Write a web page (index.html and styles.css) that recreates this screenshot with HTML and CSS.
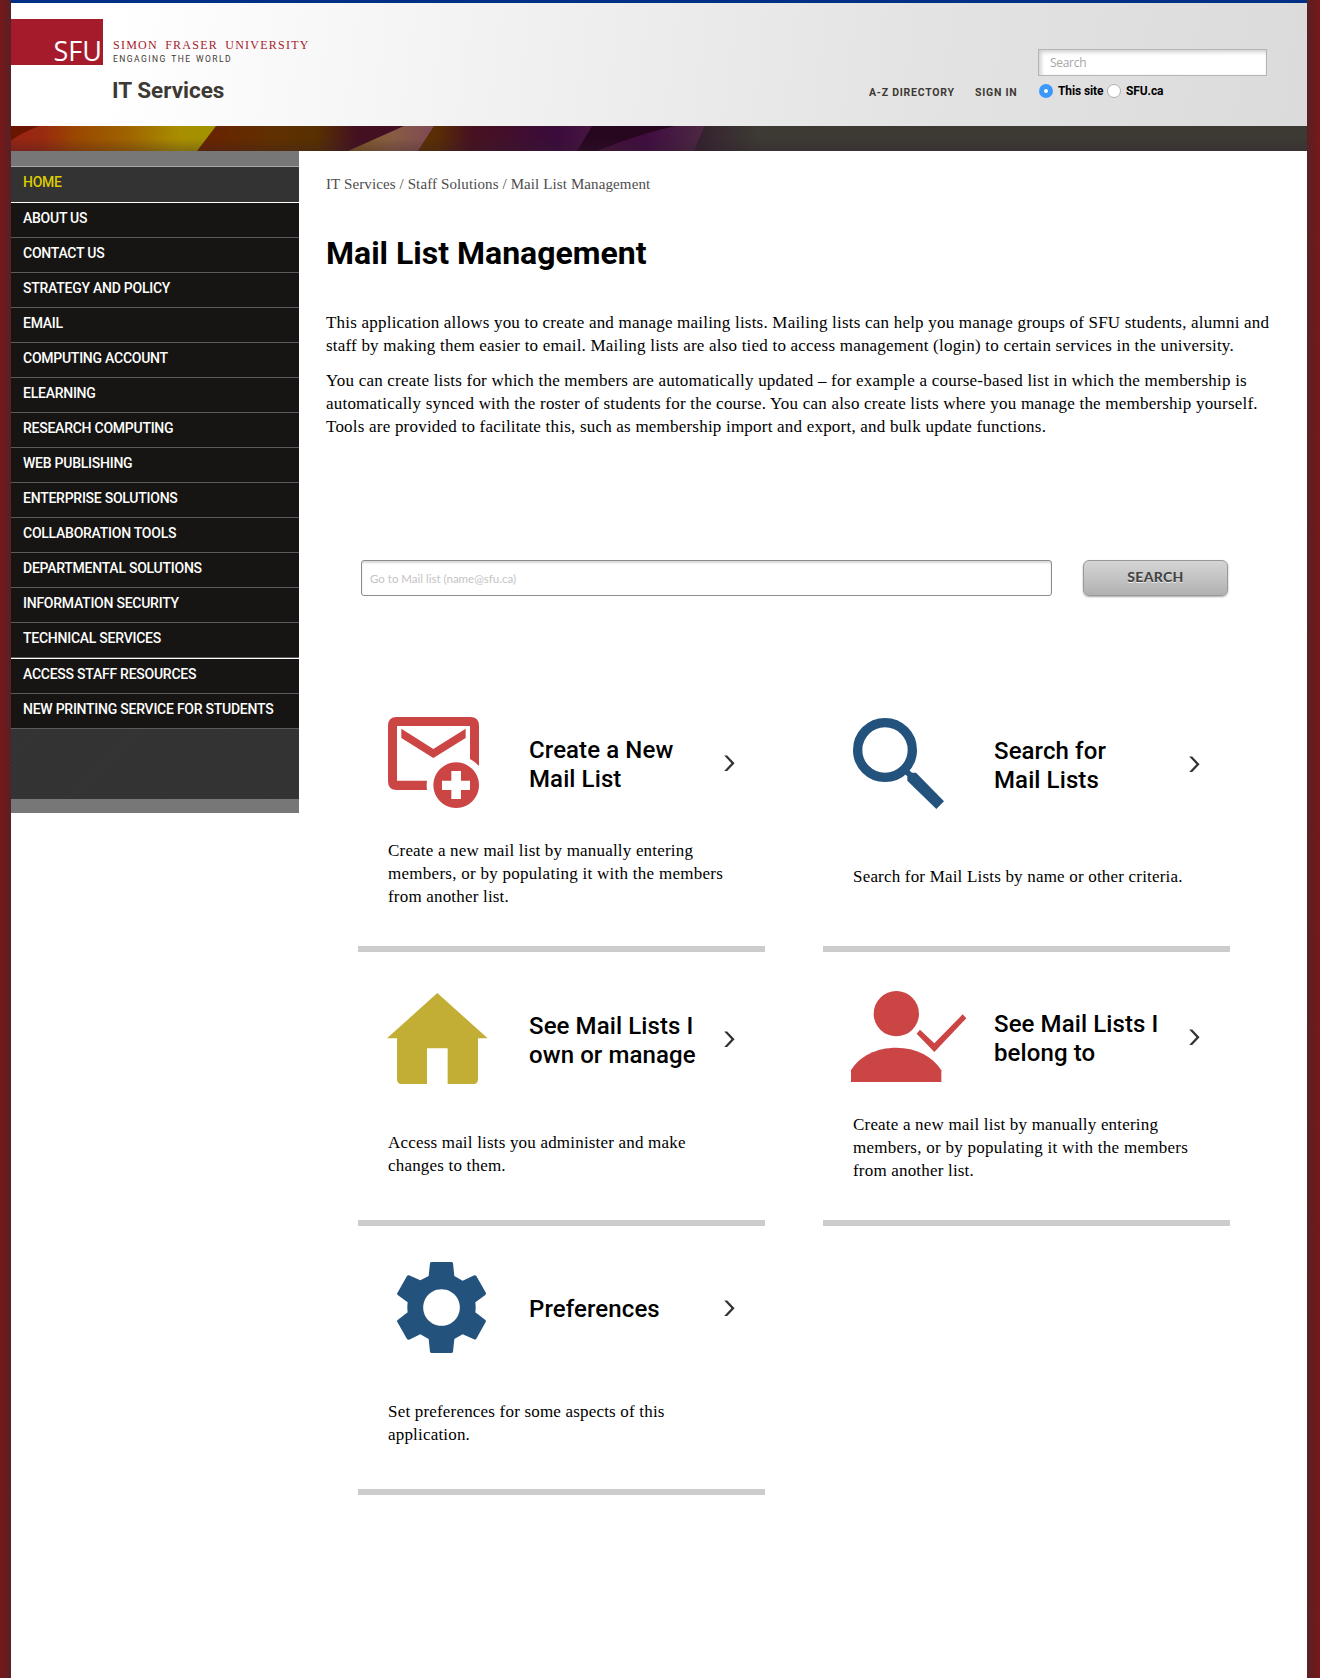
FILE: index.html
```html
<!DOCTYPE html>
<html lang="en">
<head>
<meta charset="utf-8">
<title>Mail List Management - IT Services - Simon Fraser University</title>
<link rel="stylesheet" href="styles.css">
</head>
<body>
<div class="page">
  <header class="header">
    <div class="brand">
      <div class="logo">SFU</div>
      <div class="brand-text">
        <div class="university">SIMON FRASER UNIVERSITY</div>
        <div class="tagline">ENGAGING THE WORLD</div>
        <div class="site-name">IT Services</div>
      </div>
    </div>
    <nav class="utility">
      <a class="directory">A-Z DIRECTORY</a>
      <a class="signin">SIGN IN</a>
    </nav>
    <form class="site-search">
      <div class="site-field">Search</div>
      <div class="scope">
        <span class="radio radio-on"></span><span class="scope-label scope-site">This site</span>
        <span class="radio"></span><span class="scope-label">SFU.ca</span>
      </div>
    </form>
  </header>

  <svg class="banner" viewBox="0 0 1296 25" width="1296" height="25">
    <defs>
      <linearGradient id="warm" gradientUnits="userSpaceOnUse" x1="0" y1="0" x2="205" y2="0">
        <stop offset="0" stop-color="#982414"/><stop offset=".15" stop-color="#99290f"/><stop offset=".32" stop-color="#9a4800"/><stop offset=".56" stop-color="#9f6200"/><stop offset=".82" stop-color="#a88e00"/><stop offset="1" stop-color="#a29400"/>
      </linearGradient>
      <linearGradient id="brown" gradientUnits="userSpaceOnUse" x1="186" y1="0" x2="440" y2="0">
        <stop offset="0" stop-color="#692200"/><stop offset=".3" stop-color="#613000"/><stop offset=".47" stop-color="#573000"/><stop offset=".63" stop-color="#431020"/><stop offset="1" stop-color="#401028"/>
      </linearGradient>
      <linearGradient id="peach" gradientUnits="userSpaceOnUse" x1="340" y1="0" x2="423" y2="0">
        <stop offset="0" stop-color="#805a20"/><stop offset=".5" stop-color="#875c43"/><stop offset="1" stop-color="#804a54"/>
      </linearGradient>
      <linearGradient id="plum" gradientUnits="userSpaceOnUse" x1="406" y1="0" x2="581" y2="0">
        <stop offset="0" stop-color="#5c3200"/><stop offset=".12" stop-color="#5a2c04"/><stop offset=".3" stop-color="#48121f"/><stop offset=".8" stop-color="#3a0b3c"/><stop offset="1" stop-color="#481540"/>
      </linearGradient>
      <linearGradient id="violet" gradientUnits="userSpaceOnUse" x1="586" y1="0" x2="694" y2="0">
        <stop offset="0" stop-color="#451438"/><stop offset=".45" stop-color="#400c40"/><stop offset="1" stop-color="#4c2a42"/>
      </linearGradient>
      <linearGradient id="fade" gradientUnits="userSpaceOnUse" x1="683" y1="0" x2="745" y2="0">
        <stop offset="0" stop-color="#33202e"/><stop offset="1" stop-color="#3d3933"/>
      </linearGradient>
      <linearGradient id="shade" x1="0" y1="0" x2="0" y2="1">
        <stop offset=".5" stop-color="#302030" stop-opacity="0"/><stop offset="1" stop-color="#302030" stop-opacity=".3"/>
      </linearGradient>
    </defs>
    <path fill="#3d3933" d="M0 0H1296V25H0z"/>
    <path fill="url(#fade)" d="M680 0H746V25H680z"/>
    <path fill="#27061f" d="M560 0H694L683 25H560z"/>
    <path fill="url(#violet)" d="M586 25Q628 8 664 0H694L683 25z"/>
    <path fill="url(#plum)" d="M400 0H581L566 25H400z"/>
    <path fill="url(#brown)" d="M186 0H423L407 25H186z"/>
    <path fill="url(#peach)" d="M337 25L393 0H423L407 25z"/>
    <path fill="url(#warm)" d="M0 0H205L186 25H0z"/>
    <path fill="#691500" d="M0 0H28Q12 6 0 14.500z"/>
    <path fill="url(#shade)" d="M0 0H1296V25H0z"/>
  </svg>

  <div class="body">
    <aside class="sidebar">
      <ul class="nav">
        <li class="nav-item nav-home">HOME</li>
        <li class="nav-item">ABOUT US</li>
        <li class="nav-item">CONTACT US</li>
        <li class="nav-item">STRATEGY AND POLICY</li>
        <li class="nav-item">EMAIL</li>
        <li class="nav-item">COMPUTING ACCOUNT</li>
        <li class="nav-item">ELEARNING</li>
        <li class="nav-item">RESEARCH COMPUTING</li>
        <li class="nav-item">WEB PUBLISHING</li>
        <li class="nav-item">ENTERPRISE SOLUTIONS</li>
        <li class="nav-item">COLLABORATION TOOLS</li>
        <li class="nav-item">DEPARTMENTAL SOLUTIONS</li>
        <li class="nav-item">INFORMATION SECURITY</li>
        <li class="nav-item">TECHNICAL SERVICES</li>
        <li class="nav-item nav-split">ACCESS STAFF RESOURCES</li>
        <li class="nav-item">NEW PRINTING SERVICE FOR STUDENTS</li>
      </ul>
    </aside>

    <main class="content">
      <div class="crumbs">IT Services / Staff Solutions / Mail List Management</div>
      <h1 class="title">Mail List Management</h1>
      <p class="intro">This application allows you to create and manage mailing lists. Mailing lists can help you manage groups of SFU students, alumni and<br>staff by making them easier to email. Mailing lists are also tied to access management (login) to certain services in the university.</p>
      <p class="intro">You can create lists for which the members are automatically updated – for example a course-based list in which the membership is<br>automatically synced with the roster of students for the course. You can also create lists where you manage the membership yourself.<br>Tools are provided to facilitate this, such as membership import and export, and bulk update functions.</p>

      <form class="list-search">
        <div class="list-field">Go to Mail list (name@sfu.ca)</div>
        <button class="list-button" type="button">SEARCH</button>
      </form>

      <div class="cards">
        <section class="card card-create">
          <div class="card-head">
            <div class="card-icon"><svg viewBox="114 81 273 273" width="91" height="91">
              <path fill="#cb4545" fill-rule="evenodd" d="M140 81H361Q387 81 387 107V228Q375 215 360 207V108H141V272H231Q229 286 231 300H140Q114 300 114 274V107Q114 81 140 81z"/>
              <path fill="#cb4545" d="M154 116L250 177L347 116V144L250 204L154 144z"/>
              <path fill="#cb4545" fill-rule="evenodd" d="M318.500 217a68.500 68.500 0 1 0 .1 0zM304 243H333V272H360V300H333V327H304V300H276V272H304z"/>
            </svg></div>
            <h2 class="card-title">Create a New<br>Mail List</h2>
            <svg class="chevron" viewBox="0 0 11 17" width="11" height="17"><path d="M.2.500H3.200L10.600 8.300L3.200 16H.2L7.400 8.300z"/></svg>
          </div>
          <p class="card-text">Create a new mail list by manually entering<br><span class="wide">members, or by populating it with the members</span><br>from another list.</p>
        </section>

        <section class="card card-find">
          <div class="card-head">
            <div class="card-icon"><svg viewBox="129 84 273 273" width="91" height="91">
              <circle cx="225" cy="180" r="82" fill="none" stroke="#23527c" stroke-width="28"/>
              <path fill="#23527c" d="M297 240L306 248H318L402 334L379 357L292 272V259L284 252z"/>
            </svg></div>
            <h2 class="card-title">Search for<br>Mail Lists</h2>
            <svg class="chevron" viewBox="0 0 11 17" width="11" height="17"><path d="M.2.500H3.200L10.600 8.300L3.200 16H.2L7.400 8.300z"/></svg>
          </div>
          <p class="card-text">Search for Mail Lists by name or other criteria.</p>
        </section>

        <section class="card card-own">
          <div class="card-head">
            <div class="card-icon"><svg viewBox="114 69 300 273" width="100" height="91">
              <path fill="#c2ae35" d="M262 69L413 205H384V328Q384 342 370 342H293V235H231V342H155Q141 342 141 328V205H111z"/>
            </svg></div>
            <h2 class="card-title">See Mail Lists I<br>own or manage</h2>
            <svg class="chevron" viewBox="0 0 11 17" width="11" height="17"><path d="M.2.500H3.200L10.600 8.300L3.200 16H.2L7.400 8.300z"/></svg>
          </div>
          <p class="card-text">Access mail lists you administer and make<br>changes to them.</p>
        </section>

        <section class="card card-member">
          <div class="card-head">
            <div class="card-icon"><svg viewBox="129 63 339 273" width="113" height="91">
              <circle cx="259" cy="131" r="68" fill="#cb4545"/>
              <path fill="#cb4545" d="M123 336V301C148 258 200 233 259 233S367 258 394 301V336z"/>
              <path fill="#cb4545" d="M330 179L373 220L458 133L469 145L373 246L320 191z"/>
            </svg></div>
            <h2 class="card-title">See Mail Lists I<br>belong to</h2>
            <svg class="chevron" viewBox="0 0 11 17" width="11" height="17"><path d="M.2.500H3.200L10.600 8.300L3.200 16H.2L7.400 8.300z"/></svg>
          </div>
          <p class="card-text">Create a new mail list by manually entering<br><span class="wide">members, or by populating it with the members</span><br>from another list.</p>
        </section>

        <section class="card card-prefs">
          <div class="card-head">
            <div class="card-icon"><svg viewBox="114 66 294 273" width="98" height="91">
              <path fill="#23527c" fill-rule="evenodd" d="M245 66H304Q308 66 309 70L313 108L338 122L373 106Q376 105 379 108L408 159Q408 162 406 165L376 187Q378 202 376 217L406 240Q409 242 407 246L379 296Q376 300 372 298L338 283L313 297L309 335Q308 339 304 339H245Q241 339 240 335L236 297L211 283L177 299Q173 300 171 297L142 246Q140 243 143 240L173 217Q171 202 173 187L143 165Q140 162 142 159L171 108Q173 105 177 106L211 121L236 108L240 70Q241 66 245 66zM274.500 147.500a55 55 0 1 0 .1 0z"/>
            </svg></div>
            <h2 class="card-title">Preferences</h2>
            <svg class="chevron" viewBox="0 0 11 17" width="11" height="17"><path d="M.2.500H3.200L10.600 8.300L3.200 16H.2L7.400 8.300z"/></svg>
          </div>
          <p class="card-text">Set preferences for some aspects of this<br>application.</p>
        </section>
      </div>
    </main>
  </div>
</div>
</body>
</html>
```
FILE: styles.css
```css
* { box-sizing: border-box; }

body {
  margin: 0;
  padding: 0 13px 0 11px;
  font-family: "Liberation Serif", serif;
  color: #000;
  background:
    linear-gradient(90deg, rgba(60, 40, 45, 0) 0, rgba(60, 40, 45, .55) 11px, rgba(60, 40, 45, .55) 1307px, rgba(60, 40, 45, 0) 1319px),
    repeating-linear-gradient(45deg, #7c191b 0, #7c191b 1.400px, #721618 1.400px, #721618 2.800px);
}

.page { width: 1296px; min-height: 1678px; background: #fff; }

.header {
  display: flex;
  height: 126px;
  border-top: 3px solid #002f87;
  background: linear-gradient(97deg, #fff 8%, #f3f3f3 34%, #e3e3e3 70%, #dbdbdb);
}

.brand { display: flex; width: 858px; padding-top: 16px; }
.logo {
  width: 92px;
  height: 46px;
  padding-right: 1px;
  background: #a51b2c;
  color: #fff;
  font: 500 27px/63px "Open Sans", sans-serif;
  text-align: right;
}
.brand-text { padding: 20px 0 0 10px; white-space: nowrap; }
.university { color: #a51b2c; font-size: 12px; line-height: 13px; letter-spacing: 1.250px; word-spacing: 3px; }
.tagline { margin-top: 1px; color: #3d3933; font: 8.500px/12px Roboto, sans-serif; letter-spacing: 1.450px; word-spacing: 1px; }
.site-name { margin: 11px 0 0 -1px; color: #3d3933; font: bold 22.500px/28px Roboto, sans-serif; }

.utility {
  display: flex;
  width: 169px;
  padding-top: 83px;
  color: #3d3933;
  font: bold 10.500px/14px Roboto, sans-serif;
  letter-spacing: .75px;
  white-space: nowrap;
}
.directory { width: 106px; }

.site-search { padding-top: 46px; }
.site-field {
  width: 229px;
  height: 27px;
  padding-left: 11px;
  border: 1px solid #b5b5b5;
  background: #fff;
  box-shadow: inset 2px 2px 4px rgba(0, 0, 0, .2);
  color: #a6a6a6;
  font: 12px/25px "Open Sans", sans-serif;
  letter-spacing: -.3px;
}
.scope { display: flex; align-items: center; height: 15px; margin-top: 7px; padding-left: 1px; }
.radio { width: 14px; height: 14px; border: 1px solid #b0b0b0; border-radius: 50%; background: #fff; }
.radio-on { border: 5px solid #3b99fc; }
.scope-label { margin: 1px 0 0 5px; font: bold 12px/14px Roboto, sans-serif; letter-spacing: -.1px; }
.scope-site { width: 49px; white-space: nowrap; }

.banner { display: block; }
.body { display: flex; }

.sidebar { width: 288px; height: 662px; border: solid #777; border-width: 15px 0 14px; background: repeating-linear-gradient(135deg, #313131 0, #313131 1.400px, #363636 1.400px, #363636 2.800px); }
.nav { margin: 0; padding: 0; border-top: 1px solid #a9a9a9; list-style: none; }
.nav-item {
  height: 35px;
  padding-left: 12px;
  border-bottom: 1px solid #5b5b5b;
  background: #161513;
  color: #fff;
  font: 500 14px/31px Roboto, sans-serif;
  letter-spacing: -.25px;
  white-space: nowrap;
}
.nav-home { height: 36px; border-bottom-color: #fff; background: #333; color: #dccb00; }
.nav-split { height: 36px; border-top: 1px solid #fff; }

.content { flex: 1; padding: 23px 0 0 27px; }
.crumbs { color: #4d4d4d; font-size: 15px; line-height: 20px; letter-spacing: .11px; }
.title { margin: 40px 0 39px; font: bold 32px/38px Roboto, sans-serif; }
.intro { margin: 0 0 12px; font-size: 17px; line-height: 23px; letter-spacing: .21px; white-space: nowrap; }

.list-search { display: flex; gap: 31px; margin: 122px 0 82px 35px; }
.list-field {
  width: 691px;
  height: 36px;
  padding-left: 8px;
  border: 1px solid #8c8c8c;
  border-radius: 3px;
  box-shadow: inset 0 2px 2px rgba(0, 0, 0, .15);
  color: #c4c4c4;
  font: 11.500px/35px Lato, sans-serif;
}
.list-button {
  width: 145px;
  height: 36px;
  padding: 0 0 3px;
  border: 1px solid #999;
  border-radius: 6px;
  background: linear-gradient(#d5d5d5, #b1b1b1);
  box-shadow: 0 1px 2px rgba(0, 0, 0, .35);
  color: #444;
  font: 900 14px/28px Lato, sans-serif;
  letter-spacing: .3px;
  text-shadow: 0 1px 0 #eee;
}

.cards { display: grid; grid-template-columns: 407px 407px; grid-template-rows: 274px 274px 269px; column-gap: 58px; margin-left: 32px; }
.card { padding: 39px 0 0 30px; border-bottom: 6px solid #ccc; }
.card-find { padding-top: 40px; }
.card-own { padding-top: 41px; }
.card-prefs { padding-top: 36px; }
.card-head { display: flex; align-items: center; height: 95px; }
.card-icon { align-self: flex-start; width: 141px; height: 91px; }
.card-icon svg { display: block; overflow: visible; }
.card-title { width: 195px; margin: 0; font: 500 24px/29px Roboto, sans-serif; letter-spacing: .1px; white-space: nowrap; }
.chevron { margin-bottom: 3px; fill: #333; }
.card-text { margin: 27px 0 0; font-size: 17px; line-height: 23px; letter-spacing: .19px; white-space: nowrap; }
.card-text .wide { letter-spacing: .27px; }
.card-find .card-text { margin-top: 52px; }
.card-own .card-text, .card-prefs .card-text { margin-top: 43px; }
```
